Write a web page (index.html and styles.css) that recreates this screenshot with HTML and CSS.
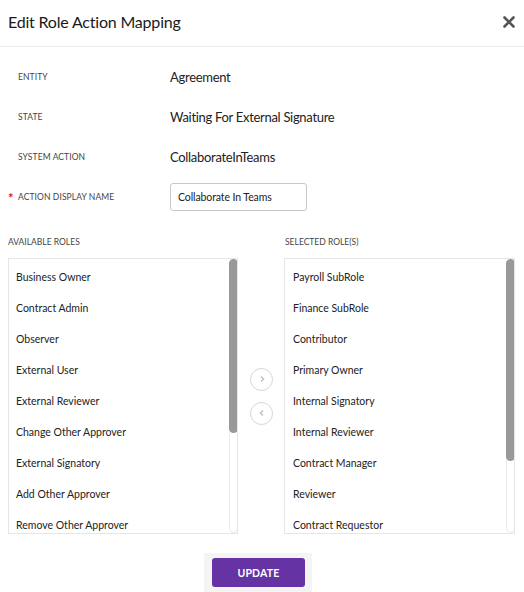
FILE: index.html
```html
<!DOCTYPE html>
<html>
<head>
<meta charset="utf-8">
<link rel="stylesheet" href="styles.css">
</head>
<body>
<div class="modal">
  <div class="header">
    <div class="title">Edit Role Action Mapping</div>
    <svg class="close" width="12" height="12" viewBox="0 0 12 12"><path d="M1.5 1.5 L10.5 10.5 M10.5 1.5 L1.5 10.5" stroke="#555" stroke-width="2.6" stroke-linecap="round"/></svg>
  </div>
  <div class="form">
    <div class="row"><span class="req"></span><span class="label">ENTITY</span><span class="value">Agreement</span></div>
    <div class="row"><span class="req"></span><span class="label">STATE</span><span class="value">Waiting For External Signature</span></div>
    <div class="row"><span class="req"></span><span class="label">SYSTEM ACTION</span><span class="value">CollaborateInTeams</span></div>
    <div class="row"><span class="req">*</span><span class="label">ACTION DISPLAY NAME</span><input class="input" type="text" value="Collaborate In Teams"></div>
  </div>
  <div class="lists">
    <div class="col">
      <div class="sec">AVAILABLE ROLES</div>
      <div class="list">
        <div class="items">
          <div class="item">Business Owner</div>
          <div class="item">Contract Admin</div>
          <div class="item">Observer</div>
          <div class="item">External User</div>
          <div class="item">External Reviewer</div>
          <div class="item">Change Other Approver</div>
          <div class="item">External Signatory</div>
          <div class="item">Add Other Approver</div>
          <div class="item">Remove Other Approver</div>
        </div>
        <div class="track"><div class="thumb thumb-left"></div></div>
      </div>
    </div>
    <div class="arrows">
      <div class="circle"><svg width="8" height="8" viewBox="0 0 8 8"><path d="M3 1.5 L5.5 4 L3 6.5" fill="none" stroke="#c4c4c4" stroke-width="1.6"/></svg></div>
      <div class="circle"><svg width="8" height="8" viewBox="0 0 8 8"><path d="M5 1.5 L2.5 4 L5 6.5" fill="none" stroke="#c4c4c4" stroke-width="1.6"/></svg></div>
    </div>
    <div class="col">
      <div class="sec">SELECTED ROLE(S)</div>
      <div class="list">
        <div class="items">
          <div class="item">Payroll SubRole</div>
          <div class="item">Finance SubRole</div>
          <div class="item">Contributor</div>
          <div class="item">Primary Owner</div>
          <div class="item">Internal Signatory</div>
          <div class="item">Internal Reviewer</div>
          <div class="item">Contract Manager</div>
          <div class="item">Reviewer</div>
          <div class="item">Contract Requestor</div>
        </div>
        <div class="track"><div class="thumb thumb-right"></div></div>
      </div>
    </div>
  </div>
  <div class="footer">
    <div class="btnwrap"><button class="btn">UPDATE</button></div>
  </div>
</div>
</body>
</html>
```

FILE: styles.css
```css
* { box-sizing: border-box; }
html, body { margin: 0; padding: 0; background: #fff; }
body { font-family: Lato, "Open Sans", sans-serif; color: #222; width: 524px; height: 592px; overflow: hidden; }
.header { height: 47px; display: flex; align-items: center; justify-content: space-between; padding: 0 9px 0 8px; border-bottom: 1px solid #ececec; }
.title { font-size: 16px; color: #1a1a1a; padding-bottom: 3px; letter-spacing: -0.2px; }
.close { margin-bottom: 2px; }
.form { padding-top: 10px; }
.row { height: 40px; display: flex; align-items: center; padding-left: 8px; }
.req { width: 10px; color: #d92020; font-size: 13px; font-weight: bold; padding-top: 2px; }
.label { width: 152px; font-size: 8.5px; color: #444; letter-spacing: 0.1px; }
.value { font-size: 13px; color: #222; letter-spacing: -0.3px; }
.input { width: 137px; height: 28px; border: 1px solid #c8c8c8; border-radius: 3px; padding: 0 0 0 7px; font-family: inherit; font-size: 10.5px; color: #222; outline: none; letter-spacing: -0.1px; }
.lists { display: flex; padding: 17px 9px 0 8px; }
.col { display: flex; flex-direction: column; }
.col:first-child { width: 230px; }
.col:last-child { width: 231px; }
.sec { font-size: 8.5px; color: #444; height: 16px; line-height: 16px; margin-bottom: 8px; }
.col:last-child .sec { padding-left: 1px; }
.list { height: 276px; border: 1px solid #e6e6e6; display: flex; overflow: hidden; }
.items { flex: 1; padding-top: 3px; }
.track { width: 9px; margin: 0 -1px 0 0; border: 1px solid #ebebeb; border-radius: 5px; background: #fff; display: flex; flex-direction: column; }
.thumb { background: #999; border-radius: 5px; margin: -1px; }
.thumb-left { height: 174px; }
.thumb-right { height: 202px; }
.item { height: 31px; line-height: 31px; padding-left: 7px; font-size: 10.5px; color: #222; white-space: nowrap; }
.col:last-child .item { padding-left: 8px; }
.arrows { width: 46px; display: flex; flex-direction: column; align-items: center; justify-content: center; gap: 11px; padding-top: 24px; padding-left: 1px; }
.circle { width: 23px; height: 23px; border: 1.5px solid #d6d6d6; border-radius: 50%; display: flex; align-items: center; justify-content: center; }
.footer { display: flex; justify-content: center; padding: 19px 0 0 0; margin-left: -8px; }
.btnwrap { background: #f4f4f4; padding: 5px 7px 10px 8px; width: 108px; }
.btn { width: 93px; height: 29px; background: #6633a4; color: #fff; border: none; border-radius: 3px; font-family: inherit; font-weight: bold; font-size: 10.5px; letter-spacing: 0.2px; }
```
